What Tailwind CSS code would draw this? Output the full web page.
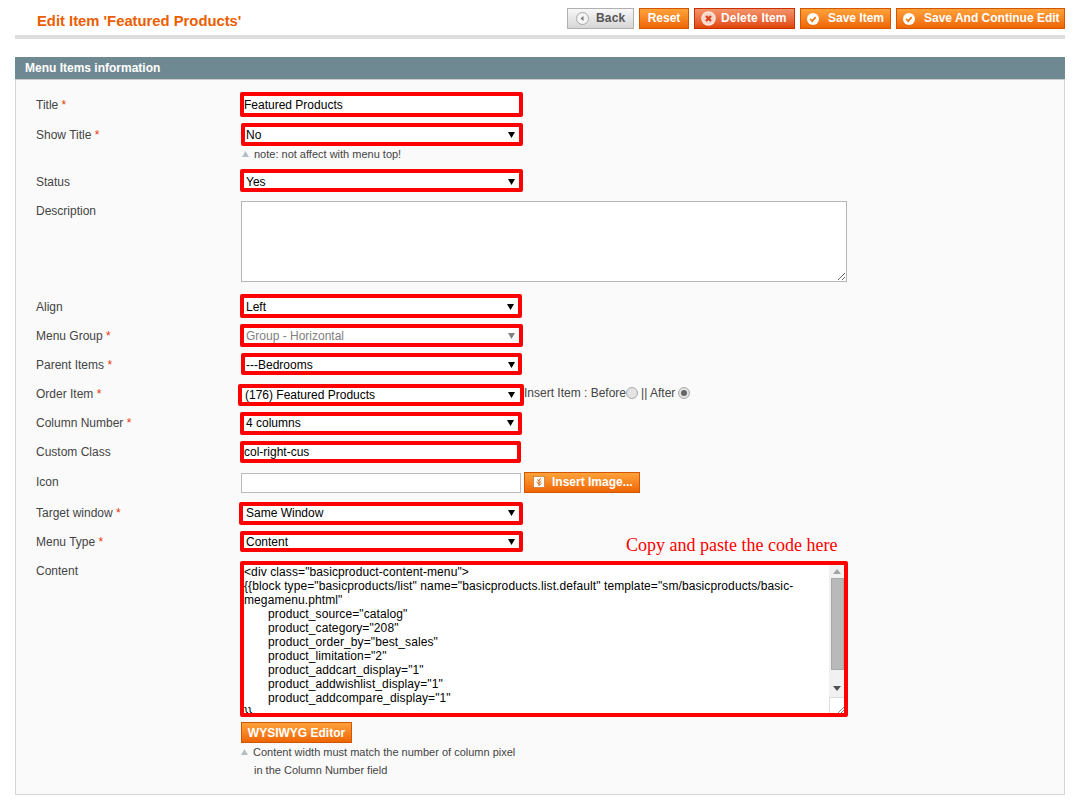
<!DOCTYPE html>
<html lang="en">
<head>
    <meta charset="UTF-8">
    <title>Edit Item 'Featured Products'</title>
    <script src="https://cdn.jsdelivr.net/npm/@tailwindcss/browser@4"></script>
</head>
<body class="bg-white font-['Liberation_Sans',Arial,sans-serif] text-[12px] text-[#444]">
    <div class="w-[1086px] h-[812px] overflow-hidden pl-[15px] pr-[21px] pt-[8px]">
        <!-- Page head -->
        <header class="h-[27px] border-b-[4px] border-[#ddd] box-content flex justify-between items-start">
            <h3 class="ml-[22px] mt-[4px] text-[14.8px] leading-[18px] font-bold text-[#eb5e00]">Edit Item 'Featured Products'</h3>
            <div class="flex gap-[5px] h-[21px] text-[12px] font-bold">
                <button class="w-[67px] pb-[2px] border border-[#b0b0b0] bg-linear-to-b from-[#f8f8f8] to-[#d6d6d6] text-[#555] flex items-center pl-[8px] gap-[7px] tracking-[0.2px]">
                    <svg class="mt-[2px]" width="13" height="13" viewBox="0 0 13 13"><circle cx="6.500" cy="6.500" r="6" fill="#f4f4f4" stroke="#a8a8a8"/><path d="M7.500 4v5L4.500 6.500z" fill="#777"/></svg>
                    <span>Back</span>
                </button>
                <button class="w-[50px] pb-[2px] border border-[#d25500] bg-linear-to-b from-[#ffa238] to-[#ee6500] text-white">Reset</button>
                <button class="w-[101px] pb-[2px] border border-[#c83000] bg-linear-to-b from-[#f39468] to-[#e04400] text-white flex items-center pl-[6px] gap-[5px] tracking-[0.15px]">
                    <svg class="mt-[2px]" width="15" height="15" viewBox="0 0 15 15"><circle cx="7.500" cy="7.500" r="6.500" fill="#f6d5c8" stroke="#fbe6dd" stroke-width="1.500"/><path d="M5 5l5 5M10 5l-5 5" stroke="#d8401a" stroke-width="2.400"/></svg>
                    <span>Delete Item</span>
                </button>
                <button class="w-[91px] pb-[2px] border border-[#d25500] bg-linear-to-b from-[#ffa238] to-[#ee6500] text-white flex items-center pl-[6px] gap-[9px]">
                    <svg class="mt-[2px]" width="12" height="12" viewBox="0 0 12 12"><circle cx="6" cy="6" r="6" fill="#fff"/><path d="M3.200 6l2 2.200 3.500-4" fill="none" stroke="#eb7a10" stroke-width="1.800"/></svg>
                    <span>Save Item</span>
                </button>
                <button class="w-[169px] pb-[2px] border border-[#d25500] bg-linear-to-b from-[#ffa238] to-[#ee6500] text-white flex items-center pl-[6px] gap-[9px]">
                    <svg class="mt-[2px]" width="12" height="12" viewBox="0 0 12 12"><circle cx="6" cy="6" r="6" fill="#fff"/><path d="M3.200 6l2 2.200 3.500-4" fill="none" stroke="#eb7a10" stroke-width="1.800"/></svg>
                    <span>Save And Continue Edit</span>
                </button>
            </div>
        </header>

        <!-- Form panel -->
        <section class="mt-[18px]">
            <div class="h-[22px] bg-[#6f8992] text-white font-bold pl-[10px] leading-[22px]">Menu Items information</div>
            <div class="h-[716px] bg-[#fafafa] border border-t-[#ccc] border-[#d6d6d6] pl-[20px] pt-[12px] leading-[14px]">

                <div class="flex h-[25px] items-center">
                    <label class="w-[204px]">Title <span class="text-[#eb340a]">*</span></label>
                    <div class="w-[283px] h-full border-[4px] border-[#f00] rounded-[2px] bg-white text-black flex items-center">Featured Products</div>
                </div>

                <div class="flex h-[23px] items-center mt-[6px]">
                    <label class="w-[205px]">Show Title <span class="text-[#eb340a]">*</span></label>
                    <div class="w-[282px] h-full border-[4px] border-[#f00] rounded-[2px] bg-white text-black pl-[1px] pr-[4px] flex items-center justify-between">No<svg width="7" height="6" viewBox="0 0 7 6"><path d="M0 0h7L3.500 6z"/></svg></div>
                </div>
                <p class="h-[23px] ml-[206px] pt-[1px] text-[11px] text-[#444] flex items-start gap-[5px] leading-[14px]">
                    <svg class="mt-[4px]" width="7" height="6" viewBox="0 0 7 6"><path d="M3.500 0L7 6H0z" fill="#b5c0c4"/></svg>
                    <span>note: not affect with menu top!</span>
                </p>

                <div class="flex h-[23px] items-center">
                    <label class="w-[204px] pt-[2px]">Status</label>
                    <div class="w-[283px] h-full border-[4px] border-[#f00] rounded-[2px] bg-white text-black pl-[2px] pr-[4px] pt-[2px] flex items-center justify-between">Yes<svg width="7" height="6" viewBox="0 0 7 6"><path d="M0 0h7L3.500 6z"/></svg></div>
                </div>

                <div class="flex h-[81px] mt-[9px]">
                    <label class="w-[205px] pt-[3px]">Description</label>
                    <textarea class="w-[606px] h-full border border-[#b5b5b5] bg-white"></textarea>
                </div>

                <div class="flex h-[24px] items-center mt-[12px]">
                    <label class="w-[204px] pt-[2px]">Align</label>
                    <div class="w-[282px] h-full border-[4px] border-[#f00] rounded-[2px] bg-white text-black pl-[2px] pr-[4px] pt-[2px] flex items-center justify-between">Left<svg width="7" height="6" viewBox="0 0 7 6"><path d="M0 0h7L3.500 6z"/></svg></div>
                </div>

                <div class="flex h-[23px] items-center mt-[6px]">
                    <label class="w-[204px] pt-[1px]">Menu Group <span class="text-[#eb340a]">*</span></label>
                    <div class="w-[283px] h-full border-[4px] border-[#f00] rounded-[2px] bg-white text-[#808080] pl-[2px] pr-[4px] flex items-center justify-between">Group - Horizontal<svg width="7" height="6" viewBox="0 0 7 6"><path d="M0 0h7L3.500 6z" fill="#808080"/></svg></div>
                </div>

                <div class="flex h-[22px] items-center mt-[6px]">
                    <label class="w-[205px] pt-[2px]">Parent Items <span class="text-[#eb340a]">*</span></label>
                    <div class="w-[281px] h-full border-[4px] border-[#f00] rounded-[2px] bg-white text-black pl-[1px] pr-[3px] pt-[2px] flex items-center justify-between">---Bedrooms<svg width="7" height="6" viewBox="0 0 7 6"><path d="M0 0h7L3.500 6z"/></svg></div>
                </div>

                <div class="flex h-[22px] items-center mt-[9px]">
                    <label class="w-[202px] pb-[2px]">Order Item <span class="text-[#eb340a]">*</span></label>
                    <div class="w-[286px] h-full border-[4px] border-[#f00] rounded-[2px] bg-white text-black pl-[3px] pr-[5px] pb-[1px] flex items-center justify-between">(176) Featured Products<svg width="7" height="6" viewBox="0 0 7 6"><path d="M0 0h7L3.500 6z"/></svg></div>
                    <div class="flex items-center -mt-[4px]">
                        <span>Insert Item : Before</span>
                        <span class="w-[12px] h-[12px] rounded-full border border-[#aaa] bg-[#e4e4e4]"></span>
                        <span class="ml-[3px]">|| After</span>
                        <span class="ml-[3px] w-[12px] h-[12px] rounded-full border border-[#aaa] bg-[#e4e4e4] flex items-center justify-center"><span class="w-[6px] h-[6px] rounded-full bg-[#666]"></span></span>
                    </div>
                </div>

                <div class="flex h-[23px] items-center mt-[6px]">
                    <label class="w-[204px] pb-[2px]">Column Number <span class="text-[#eb340a]">*</span></label>
                    <div class="w-[282px] h-full border-[4px] border-[#f00] rounded-[2px] bg-white text-black pl-[2px] pr-[4px] pb-[2px] flex items-center justify-between">4 columns<svg width="7" height="6" viewBox="0 0 7 6"><path d="M0 0h7L3.500 6z"/></svg></div>
                </div>

                <div class="flex h-[22px] items-center mt-[6px]">
                    <label class="w-[204px]">Custom Class</label>
                    <div class="w-[281px] h-full border-[4px] border-[#f00] rounded-[2px] bg-white text-black flex items-center">col-right-cus</div>
                </div>

                <div class="flex h-[20px] items-center mt-[10px]">
                    <label class="w-[205px] pb-[2px]">Icon</label>
                    <input class="w-[280px] h-full border border-[#bbb] bg-white">
                    <button class="ml-[3px] -mt-[2px] w-[116px] h-[21px] border border-[#d25500] bg-linear-to-b from-[#ffa238] to-[#ee6500] text-white font-bold flex items-center pl-[8px] gap-[7px]">
                        <svg width="12" height="12" viewBox="0 0 12 12"><rect x="0.500" y="0.500" width="11" height="11" fill="#fff" stroke="#b85000" stroke-width="0.500"/><path d="M6 10V4M6 8L3.500 6M6 7l2.500-2M6 5L4 3.500M6 4l2-1.500M6 9l2.500-1.500" stroke="#c96a10" fill="none"/></svg>
                        <span>Insert Image...</span>
                    </button>
                </div>

                <div class="flex h-[23px] items-center mt-[9px]">
                    <label class="w-[203px] pb-[2px]">Target window <span class="text-[#eb340a]">*</span></label>
                    <div class="w-[284px] h-full border-[4px] border-[#f00] rounded-[2px] bg-white text-black pl-[3px] pr-[4px] pb-[2px] flex items-center justify-between">Same Window<svg width="7" height="6" viewBox="0 0 7 6"><path d="M0 0h7L3.500 6z"/></svg></div>
                </div>

                <div class="flex h-[21px] items-center mt-[6px]">
                    <label class="w-[204px] pt-[1px]">Menu Type <span class="text-[#eb340a]">*</span></label>
                    <div class="w-[283px] h-full border-[4px] border-[#f00] rounded-[2px] bg-white text-black pl-[2px] pr-[4px] flex items-center justify-between">Content<svg width="7" height="6" viewBox="0 0 7 6"><path d="M0 0h7L3.500 6z"/></svg></div>
                    <span class="ml-[103px] mt-[7px] font-['Liberation_Serif',serif] text-[18px] text-[#f00] whitespace-nowrap">Copy and paste the code here</span>
                </div>

                <div class="flex h-[156px] mt-[9px]">
                    <label class="w-[204px] pt-[3px]">Content</label>
                    <div class="w-[608px] h-full border-[4px] border-[#f00] rounded-[2px] bg-white text-black flex overflow-hidden">
                        <pre class="flex-1 pr-[30px] font-['Liberation_Sans',Arial,sans-serif] text-[12px] tracking-[0.1px] leading-[14px] whitespace-pre-wrap overflow-hidden">&lt;div class="basicproduct-content-menu"&gt;
{{block type="basicproducts/list" name="basicproducts.list.default" template="sm/basicproducts/basic-megamenu.phtml"
       product_source="catalog"
       product_category="208"
       product_order_by="best_sales"
       product_limitation="2"
       product_addcart_display="1"
       product_addwishlist_display="1"
       product_addcompare_display="1"
}}</pre>
                        <div class="w-[15px] shrink-0 bg-[#f1f1f1] flex flex-col items-end">
                            <svg class="mt-[4px] mb-[4px] mr-[3px]" width="8" height="5" viewBox="0 0 8 5"><path d="M4 0l4 5H0z" fill="#a3a3a3"/></svg>
                            <div class="w-[13px] h-[92px] bg-[#b9b9b9] border border-[#a8a8a8]"></div>
                            <svg class="mt-[16px] mr-[3px]" width="8" height="5" viewBox="0 0 8 5"><path d="M0 0h8L4 5z" fill="#505050"/></svg>
                            <div class="mt-[6px] w-full flex-1 bg-white border-l border-t border-[#ddd] flex items-end justify-end">
                                <svg width="7" height="7" viewBox="0 0 7 7"><path d="M1 7l6-6M4 7l3-3" stroke="#666" stroke-width="0.800"/></svg>
                            </div>
                        </div>
                    </div>
                </div>

                <div class="ml-[205px] mt-[5px]">
                    <button class="w-[111px] h-[21px] border border-[#d25500] bg-linear-to-b from-[#ffa238] to-[#ee6500] text-white font-bold">WYSIWYG Editor</button>
                    <div class="text-[11px]">
                        <p class="h-[18px] flex items-center gap-[5px]">
                            <svg width="7" height="6" viewBox="0 0 7 6"><path d="M3.500 0L7 6H0z" fill="#b5c0c4"/></svg>
                            <span>Content width must match the number of column pixel</span>
                        </p>
                        <p class="h-[18px] pl-[13px] leading-[18px]">in the Column Number field</p>
                    </div>
                </div>
            </div>
        </section>
    </div>
</body>
</html>
